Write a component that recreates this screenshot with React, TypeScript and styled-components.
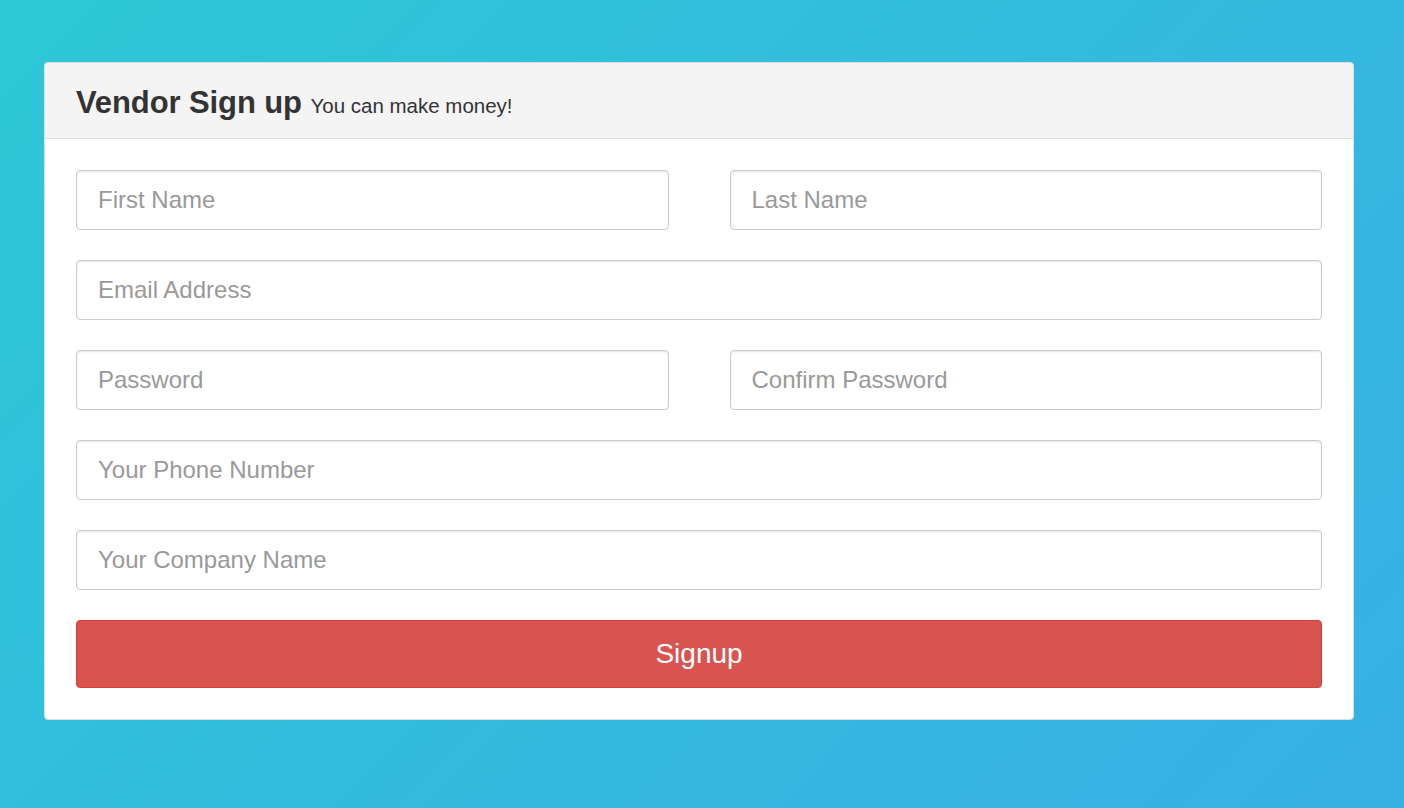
import React from "react";
import styled, { createGlobalStyle } from "styled-components";

const GlobalStyle = createGlobalStyle`
  html, body {
    margin: 0;
    padding: 0;
  }
  body {
    font-family: "Liberation Sans", Arial, sans-serif;
    color: #333;
  }
  * {
    box-sizing: border-box;
  }
`;

type Field = {
  placeholder: string;
  type?: string;
};

const rows: Field[][] = [
  [{ placeholder: "First Name" }, { placeholder: "Last Name" }],
  [{ placeholder: "Email Address", type: "email" }],
  [
    { placeholder: "Password", type: "password" },
    { placeholder: "Confirm Password", type: "password" },
  ],
  [{ placeholder: "Your Phone Number", type: "tel" }],
  [{ placeholder: "Your Company Name" }],
];

const App: React.FC = () => {
  return (
    <Page>
      <GlobalStyle />
      <Panel>
        <PanelHeading>
          <Title>
            Vendor Sign up <small>You can make money!</small>
          </Title>
        </PanelHeading>
        <PanelBody>
          {rows.map((row, i) => (
            <FormRow key={i} cols={row.length}>
              {row.map((field) => (
                <Input
                  key={field.placeholder}
                  type={field.type || "text"}
                  placeholder={field.placeholder}
                />
              ))}
            </FormRow>
          ))}
          <SubmitButton type="button">Signup</SubmitButton>
        </PanelBody>
      </Panel>
    </Page>
  );
};

export default App;

const Page = styled.div`
  width: 100%;
  min-height: 808px;
  background: linear-gradient(135deg, #2dc8d6 0%, #33bade 55%, #37b0e4 100%);
  padding: 62px 50px 40px 44px;
`;

const Panel = styled.div`
  width: 1310px;
  background: #fff;
  border: 1px solid #ddd;
  border-radius: 4px;
  overflow: hidden;
`;

const PanelHeading = styled.div`
  background: #f4f4f4;
  border-bottom: 1px solid #ddd;
  height: 76px;
  padding: 0 31px;
  display: flex;
  align-items: center;
`;

const Title = styled.h3`
  margin: 0;
  padding-top: 4px;
  font-size: 31px;
  font-weight: 700;
  color: #333;
  letter-spacing: -0.1px;

  small {
    font-size: 20.5px;
    font-weight: 400;
    color: #333;
    letter-spacing: 0;
  }
`;

const PanelBody = styled.div`
  padding: 31px;
  display: flex;
  flex-direction: column;
  gap: 30px;
`;

const FormRow = styled.div<{ cols: number }>`
  display: grid;
  grid-template-columns: repeat(${(p) => p.cols}, 1fr);
  column-gap: 61px;
`;

const Input = styled.input`
  display: block;
  width: 100%;
  height: 60px;
  padding: 0 21px;
  font-family: "Liberation Sans", Arial, sans-serif;
  font-size: 24px;
  color: #555;
  background: #fff;
  border: 1px solid #ccc;
  border-radius: 4px;
  box-shadow: inset 0 1px 2px rgba(0, 0, 0, 0.1);
  outline: none;

  &::placeholder {
    color: #999;
  }
`;

const SubmitButton = styled.button`
  display: block;
  width: 100%;
  height: 68px;
  font-family: "Liberation Sans", Arial, sans-serif;
  font-size: 28px;
  color: #fff;
  background: #d9534f;
  border: 1px solid #d43f3a;
  border-radius: 4px;
  cursor: pointer;
`;
